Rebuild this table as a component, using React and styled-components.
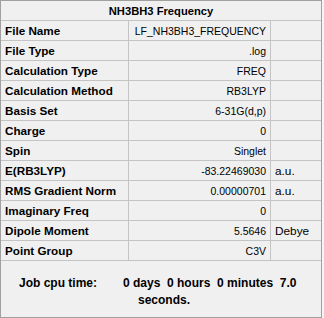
import { Fragment } from "react";
import styled, { createGlobalStyle } from "styled-components";

const GlobalStyle = createGlobalStyle`
  html, body {
    margin: 0;
    padding: 0;
    background: #f4f4f4;
  }
  body {
    font-family: "Liberation Sans", Arial, sans-serif;
    font-size: 11px;
    color: #000;
  }
`;

const rows = [
  { label: "File Name", value: "LF_NH3BH3_FREQUENCY" },
  { label: "File Type", value: ".log" },
  { label: "Calculation Type", value: "FREQ" },
  { label: "Calculation Method", value: "RB3LYP" },
  { label: "Basis Set", value: "6-31G(d,p)" },
  { label: "Charge", value: "0" },
  { label: "Spin", value: "Singlet" },
  { label: "E(RB3LYP)", value: "-83.22469030", unit: "a.u." },
  { label: "RMS Gradient Norm", value: "0.00000701", unit: "a.u." },
  { label: "Imaginary Freq", value: "0" },
  { label: "Dipole Moment", value: "5.5646", unit: "Debye" },
  { label: "Point Group", value: "C3V" },
];

const Panel = styled.div`
  box-sizing: border-box;
  width: 322px;
  height: 318px;
  background: #f0f0f0;
  border: 1px solid #a0a0a0;
  display: flex;
  flex-direction: column;
`;

const Grid = styled.div`
  display: grid;
  grid-template-columns: 128px 142px 1fr;
  grid-auto-rows: 20px;
`;

const Title = styled.div`
  grid-column: 1 / -1;
  display: flex;
  align-items: center;
  justify-content: center;
  font-weight: bold;
  font-size: 11.2px;
  border-bottom: 1px solid #c4c4c4;
`;

const Cell = styled.div`
  box-sizing: border-box;
  display: flex;
  align-items: center;
  border-bottom: 1px solid #c4c4c4;
  border-right: 1px solid #c4c4c4;
  white-space: nowrap;
  overflow: hidden;
`;

const LabelCell = styled(Cell)`
  padding-left: 4px;
  font-weight: bold;
  font-size: 11.7px;
`;

const ValueCell = styled(Cell)`
  justify-content: flex-end;
  padding-right: 4px;
  font-size: 10.5px;
`;

const UnitCell = styled(Cell)`
  padding-left: 4px;
  font-size: 11.8px;
  border-right: none;
`;

const Footer = styled.div`
  display: flex;
  align-items: flex-start;
  padding: 14px 0 0 18px;
  font-weight: bold;
  font-size: 12px;
  line-height: 17px;
`;

const FooterLabel = styled.div`
  width: 104px;
`;

const FooterValue = styled.div`
  width: 180px;
  padding-left: 15px;
  text-indent: -15px;
  white-space: pre-wrap;
`;

export default function App() {
  return (
    <>
      <GlobalStyle />
      <Panel>
        <Grid>
          <Title>NH3BH3 Frequency</Title>
          {rows.map((r) => (
            <Fragment key={r.label}>
              <LabelCell>{r.label}</LabelCell>
              <ValueCell>{r.value}</ValueCell>
              <UnitCell>{r.unit}</UnitCell>
            </Fragment>
          ))}
        </Grid>
        <Footer>
          <FooterLabel>Job cpu time:</FooterLabel>
          <FooterValue>{"0 days  0 hours  0 minutes  7.0 seconds."}</FooterValue>
        </Footer>
      </Panel>
    </>
  );
}
